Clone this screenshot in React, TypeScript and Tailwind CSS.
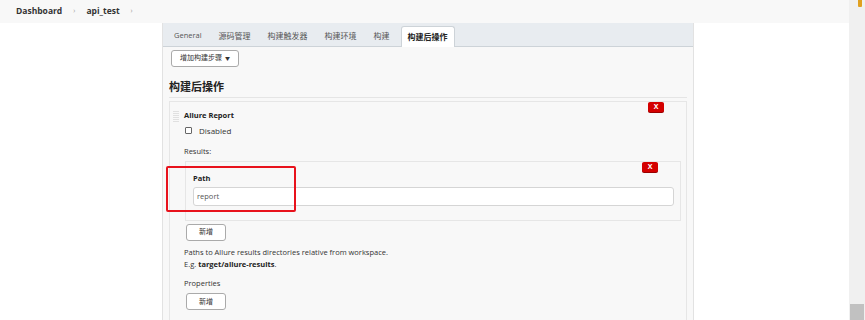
import React from 'react';

const font = { fontFamily: '"Open Sans", "Noto Sans CJK SC", sans-serif' };

const tabs = ['General', '源码管理', '构建触发器', '构建环境', '构建', '构建后操作'];

const RedX = () => (
  <span className="flex h-[10px] w-[16px] items-center justify-center rounded-[2px] bg-[#d40000] text-[7px] font-bold leading-none text-white shadow-[0_1px_0_#900]">
    X
  </span>
);

const SmallButton = ({ label }: { label: string }) => (
  <button className="flex h-[17px] w-[40px] items-center justify-center rounded-[3px] border border-[#aaa] bg-white text-[7px] text-[#333]">
    {label}
  </button>
);

export default function App() {
  return (
    <div className="flex h-[320px] w-[865px] overflow-hidden bg-white text-[#333]" style={font}>
      <div className="flex flex-1 flex-col">
        {/* breadcrumb */}
        <div className="flex h-[23px] shrink-0 items-center bg-[#f8f8f8] pl-[16px] text-[8.5px] font-bold text-[#333]">
          <span>Dashboard</span>
          <span className="mx-[11px] text-[7px] font-normal text-[#999]">›</span>
          <span>api_test</span>
          <span className="ml-[11px] text-[7px] font-normal text-[#999]">›</span>
        </div>

        <div className="flex flex-1">
          <div className="w-[162px]" />
          <div className="flex w-[532px] flex-col border-x border-[#e2e2e2] bg-[#f8f8f8]">
            {/* tabs */}
            <div className="flex h-[24px] shrink-0 items-end gap-[5px] border-b border-[#cdd3d8] bg-[#e8ecf0] pl-[5px] text-[8px] text-[#555]">
              {tabs.map((t, i) =>
                i === tabs.length - 1 ? (
                  <div
                    key={t}
                    className="-mb-px flex h-[21px] items-center rounded-t-[3px] border border-b-0 border-[#cdd3d8] bg-white px-[6px] font-bold text-[#222]"
                  >
                    {t}
                  </div>
                ) : (
                  <div key={t} className={`flex h-[21px] items-center px-[6px] ${i === 0 ? 'text-[7.5px]' : ''}`}>
                    {t}
                  </div>
                )
              )}
            </div>

            <div className="flex flex-col pl-[6px] pr-[6px]">
              <div className="pl-[2px] pt-[3px]">
                <button className="flex h-[17px] w-[68px] items-center justify-center gap-[3px] rounded-[3px] border border-[#aaa] bg-white text-[7px] text-[#333]">
                  增加构建步骤
                  <span className="text-[5px]">▼</span>
                </button>
              </div>

              <div className="mt-[12px] border-b border-[#e5e5e5] pb-[1px] text-[11px] font-bold text-[#222]">构建后操作</div>

              {/* section */}
              <div className="mt-[3px] flex flex-col border border-[#e6e6e6] pb-[20px]">
                <div className="flex justify-end pr-[22px]">
                  <RedX />
                </div>
                <div className="-mt-[2px] flex items-center pl-[3px]">
                  <div className="h-[12px] w-[6px] bg-[repeating-linear-gradient(0deg,#e0e0e0_0_1px,transparent_1px_2px)]" />
                  <span className="ml-[5px] text-[7.5px] font-bold text-[#222]">Allure Report</span>
                </div>
                <label className="mt-[3px] flex items-center pl-[15px] text-[8px]">
                  <span className="h-[7px] w-[7px] rounded-[1px] border border-[#666] bg-white" />
                  <span className="ml-[7px]">Disabled</span>
                </label>
                <div className="mt-[9px] pl-[14px] text-[7.5px]">Results:</div>

                {/* results box */}
                <div className="relative ml-[15px] mr-[5px] mt-[4px] flex flex-col border border-[#e6e6e6] pb-[14px]">
                  <div className="flex justify-end pr-[22px]">
                    <RedX />
                  </div>
                  <div className="mt-[1px] pl-[7px] text-[7.5px] font-bold text-[#222]">Path</div>
                  <div className="ml-[7px] mr-[6px] mt-[3px] flex h-[19px] items-center rounded-[3px] border border-[#d5d5d5] bg-white pl-[3px] text-[7.5px] text-[#555]">
                    report
                  </div>
                  <div className="absolute left-[-20px] top-[4px] h-[46px] w-[130px] rounded-[2px] border-2 border-[#e8121c]" />
                </div>

                <div className="mt-[3px] pl-[16px]">
                  <SmallButton label="新增" />
                </div>
                <div className="mt-[5px] pl-[14px] text-[7.5px] leading-[12px]">
                  Paths to Allure results directories relative from workspace.
                  <br />
                  E.g. <b className="text-[#222]">target/allure-results</b>.
                </div>
                <div className="mt-[8px] pl-[14px] text-[7.5px]">Properties</div>
                <div className="mt-[4px] pl-[16px]">
                  <SmallButton label="新增" />
                </div>
              </div>
            </div>
          </div>
          <div className="flex-1" />
        </div>
      </div>

      {/* scrollbar */}
      <div className="relative flex w-[16px] flex-col justify-end bg-[#f0f0f0]">
        <div className="absolute right-[3px] top-0 h-[7px] w-[4px] rounded-b-[1px] bg-[#e0a020]" />
        <div className="mx-[1px] h-[16px] bg-[#c1c1c1]" />
      </div>
    </div>
  );
}
